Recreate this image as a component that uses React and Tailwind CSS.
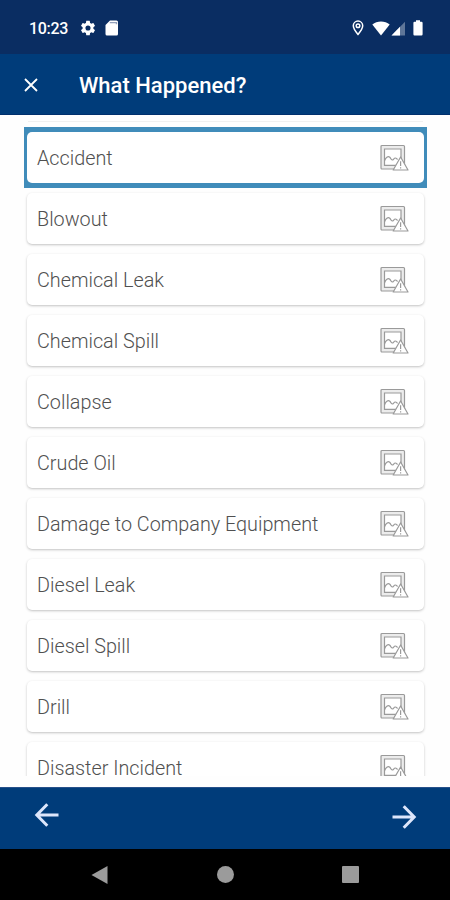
import { useState } from "react";

const incidents = [
  "Accident",
  "Blowout",
  "Chemical Leak",
  "Chemical Spill",
  "Collapse",
  "Crude Oil",
  "Damage to Company Equipment",
  "Diesel Leak",
  "Diesel Spill",
  "Drill",
  "Disaster Incident",
];

function IncidentIcon() {
  return (
    <svg width="30" height="28" viewBox="0 0 30 28" fill="none" stroke="#9a9a9a" strokeWidth="1.2">
      <rect x="1" y="1.5" width="23.5" height="23.5" rx="1" fill="#ececec" />
      <path d="M4.5 5H21V21.3H4.5Z" fill="#fff" />
      <path d="M4.7 16.5C5.5 13.5 8 11.8 9.8 13.2C10.8 14 10.8 16 12.2 16C13.6 16 13.8 14 15.3 14C16.5 14 16.8 15 17.6 15.6" />
      <path d="M20.6 13L28 26H13.2Z" fill="#fff" strokeLinejoin="round" />
      <path d="M20.6 17.3V22M20.6 23.2V24.5" />
    </svg>
  );
}

function StatusBar() {
  return (
    <div className="flex h-[54px] shrink-0 items-center justify-between bg-[#0a2d62] pt-0.5 pr-[27px] pl-[29px] text-white">
      <div className="flex items-center">
        <span className="w-[50px] pt-px text-[16px] font-medium tracking-[-0.3px]">10:23</span>
        <svg width="18" height="18" viewBox="0 0 24 24" fill="currentColor">
          <path d="M19.14 12.94c.04-.3.06-.61.06-.94s-.02-.64-.07-.94l2.03-1.58a.5.5 0 0 0 .12-.61l-1.92-3.32a.49.49 0 0 0-.59-.22l-2.39.96a7 7 0 0 0-1.62-.94l-.36-2.54A.48.48 0 0 0 13.92 2.4h-3.84c-.24 0-.43.17-.47.41l-.36 2.54c-.59.24-1.13.57-1.62.94l-2.39-.96a.48.48 0 0 0-.59.22L2.74 8.87a.48.48 0 0 0 .12.61l2.03 1.58c-.05.3-.09.63-.09.94s.02.64.07.94l-2.03 1.58a.5.5 0 0 0-.12.61l1.92 3.32c.12.22.37.29.59.22l2.39-.96c.5.38 1.03.7 1.62.94l.36 2.54c.05.24.24.41.48.41h3.84c.24 0 .44-.17.47-.41l.36-2.54a7 7 0 0 0 1.62-.94l2.39.96c.22.08.47 0 .59-.22l1.92-3.32a.48.48 0 0 0-.12-.61zM12 15.4a3.4 3.4 0 1 1 0-6.8 3.4 3.4 0 0 1 0 6.8z" />
        </svg>
        <svg className="ml-2" width="14" height="16" viewBox="0 0 14 16" fill="currentColor">
          <path d="M5 .5H11.5Q13 .5 13 2V14Q13 15.5 11.5 15.5H2Q.5 15.5 .5 14V5Z" />
          <path d="M4.8 2.6H11.5V4.2" fill="none" stroke="#93a0bb" strokeWidth="1.4" />
        </svg>
      </div>
      <div className="flex items-center">
        <svg width="12" height="16" viewBox="0 0 12 16" fill="none" stroke="currentColor" strokeWidth="1.5">
          <path d="M6 14.4C3.5 11.5 1.3 8.5 1.3 5.8A4.7 4.7 0 0 1 10.7 5.8C10.7 8.5 8.5 11.5 6 14.4Z" />
          <circle cx="6" cy="5.8" r="1.8" />
        </svg>
        <svg className="ml-2" width="18" height="15" viewBox="0 0 18 15" fill="currentColor">
          <path d="M9 14.5L.3 3.5C5-.4 13-.4 17.7 3.5Z" />
        </svg>
        <svg className="ml-px" width="15" height="15" viewBox="0 0 15 15" fill="currentColor">
          <path d="M14 .8V14.5H.5Z" opacity=".35" />
          <path d="M9 5.8V14.5H.5Z" />
        </svg>
        <svg className="ml-[7px]" width="10" height="16" viewBox="0 0 10 16" fill="currentColor">
          <path d="M3 .3H7V1.8H8.5Q9.6 1.8 9.6 3V14.3Q9.6 15.6 8.5 15.6H1.5Q.4 15.6 .4 14.3V3Q.4 1.8 1.5 1.8H3Z" />
        </svg>
      </div>
    </div>
  );
}

function IncidentRow({ label, selected, onSelect }) {
  return (
    <button
      onClick={onSelect}
      className={
        selected
          ? "block h-[61px] w-full shrink-0 bg-[#408cba] px-[3px] py-[5px]"
          : "block h-[61px] w-full shrink-0 px-[3px] py-[5px]"
      }
    >
      <span
        className={
          selected
            ? "flex h-[51px] items-center justify-between rounded-[5px] bg-white pr-3.5 pl-2.5"
            : "flex h-[51px] items-center justify-between rounded-[5px] bg-white pr-3.5 pl-2.5 shadow-[0_1px_2.5px_rgba(0,0,0,0.24)]"
        }
      >
        <span className="pt-[3px] text-[19.8px] leading-6 font-light text-[#505050]">{label}</span>
        <IncidentIcon />
      </span>
    </button>
  );
}

export default function App() {
  const [selected, setSelected] = useState("Accident");

  return (
    <div className="flex h-[900px] w-[450px] flex-col overflow-hidden bg-[#fefefe] font-[Roboto,sans-serif]">
      <StatusBar />

      {/* App bar */}
      <header className="flex h-[61px] shrink-0 items-center border-b border-[#002f6d] bg-[#003c7a] pt-px pl-6 text-white">
        <button aria-label="Close">
          <svg width="14" height="14" viewBox="0 0 14 14" stroke="currentColor" strokeWidth="1.8">
            <path d="M1 1L13 13M13 1L1 13" />
          </svg>
        </button>
        <h1 className="ml-[41px] pt-px text-[22px] font-medium">What Happened?</h1>
      </header>

      {/* Incident list */}
      <main className="h-[672px] shrink-0 pb-[11px]">
        <div className="flex h-[661px] flex-col overflow-hidden pr-[23px] pl-6">
          <div className="mx-1 mb-[5px] h-[7px] shrink-0 border-b border-[#f0f0f0]" />
          {incidents.map((label) => (
            <IncidentRow
              key={label}
              label={label}
              selected={label === selected}
              onSelect={() => setSelected(label)}
            />
          ))}
        </div>
      </main>

      <footer className="flex h-[62px] shrink-0 items-center justify-between border-t border-[#26508a] bg-[#003c7a] pr-[33px] pl-[34px] text-[#dde6fb]">
        <button aria-label="Previous" className="-mt-2">
          <svg width="25" height="24" viewBox="0 0 25 24" fill="none" stroke="currentColor" strokeWidth="3">
            <path d="M24.5 12H3M13.3 1.3L2.8 12L13.3 22.7" />
          </svg>
        </button>
        <button aria-label="Next" className="-mt-1">
          <svg width="25" height="24" viewBox="0 0 25 24" fill="none" stroke="currentColor" strokeWidth="3">
            <path d="M.5 12H22M11.7 1.3L22.2 12L11.7 22.7" />
          </svg>
        </button>
      </footer>

      {/* Android navigation */}
      <nav className="flex h-[51px] shrink-0 items-center justify-between bg-black pr-[91px] pl-[91px] text-[#9b9b9b]">
        <svg width="17" height="18" viewBox="0 0 17 18" fill="currentColor">
          <path d="M16.5 0V18L.5 9Z" />
        </svg>
        <div className="h-[17px] w-[17px] rounded-full bg-[#9b9b9b]" />
        <div className="h-[17px] w-[17px] rounded-[1px] bg-[#9b9b9b]" />
      </nav>
    </div>
  );
}
